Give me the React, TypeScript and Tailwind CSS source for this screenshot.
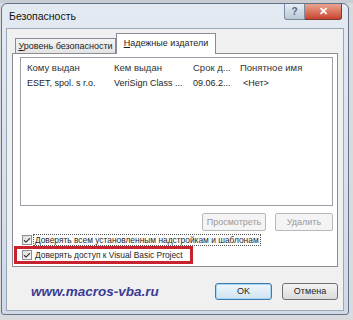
import { Check } from "lucide-react";

const font = { fontFamily: '"Liberation Sans", Arial, sans-serif' };

function CheckBox() {
  return (
    <span className="w-[10px] h-[10px] border border-[#8e8f8f] bg-gradient-to-br from-[#dcdcdc] to-[#fbfbfb] flex items-center justify-center shrink-0">
      <Check className="w-[9px] h-[9px] text-[#3a3a3a]" strokeWidth={3.2} />
    </span>
  );
}

function DisabledButton({ label, w }: { label: string; w: string }) {
  return (
    <div className={`${w} h-[18px] border border-[#b5b9bc] rounded-[2px] bg-[#f4f4f4] text-[#9a9a9a] flex items-center justify-center`}>
      {label}
    </div>
  );
}

export default function App() {
  return (
    <div style={font} className="w-[353px] h-[320px] bg-[#d8dadd] overflow-hidden flex flex-col text-[9px] text-[#1e1e1e] leading-none whitespace-nowrap">
      {/* полоска сетки над окном */}
      <div className="h-[3px] shrink-0 bg-[#c9ccd0]" />

      <div className="ml-[1px] w-[348px] h-[312px] border border-[#62738a] rounded-t-[6px] rounded-b-[3px] bg-gradient-to-b from-[#e3eaf2] to-[#cfdae6] flex flex-col px-[4px] pb-[3px] shrink-0">
        {/* заголовок */}
        <div className="h-[24px] flex justify-between shrink-0">
          <div className="pl-[3px] pt-[7px] text-[10.5px] text-[#111]">Безопасность</div>
          <div className="flex mr-[2px]">
            <div className="w-[21px] h-[16px] border border-[#7b8a9c] border-t-0 rounded-bl-[3px] bg-gradient-to-b from-[#e6edf4] to-[#b9c7d6] flex items-center justify-center text-[10px] text-[#56677c] font-bold">?</div>
            <div className="w-[37px] h-[16px] border border-[#7b3b33] border-t-0 border-l-0 rounded-br-[3px] bg-gradient-to-b from-[#e8a493] to-[#c9432b] flex items-center justify-center text-[11px] text-white font-bold">✕</div>
          </div>
        </div>

        {/* клиентская область */}
        <div className="flex-1 border border-[#9aa6b4] bg-[#f0f0f0] flex flex-col pl-[5px] pr-[5px]">
          {/* вкладки */}
          <div className="flex items-end h-[24px] pl-[3px] shrink-0">
            <div className="w-[101px] h-[15px] border border-[#898c95] border-b-0 bg-gradient-to-b from-[#f3f3f3] to-[#e3e3e3] flex items-center justify-center">
              <span><u>У</u>ровень безопасности</span>
            </div>
            <div className="w-[100px] h-[21px] border border-[#898c95] border-b-0 bg-white -mb-[1px] relative flex items-center justify-center pb-[2px]">
              <span><u>Н</u>адежные издатели</span>
            </div>
          </div>

          {/* панель */}
          <div className="h-[214px] border border-[#898c95] bg-white flex flex-col pl-[7px] pr-[4px] pt-[3px] shrink-0">
            <div className="h-[149px] border border-[#9a9ea6] flex flex-col shrink-0">
              <div className="flex h-[19px] items-center text-[#333] shrink-0 text-[9.5px]">
                <span className="w-[93px] pl-[6px]">Кому выдан</span>
                <span className="w-[79px]">Кем выдан</span>
                <span className="w-[47px]">Срок д...</span>
                <span>Понятное имя</span>
              </div>
              <div className="flex h-[13px] items-center">
                <span className="w-[93px] pl-[6px]">ESET, spol. s r.o.</span>
                <span className="w-[79px]">VeriSign Class ...</span>
                <span className="w-[50px]">09.06.2...</span>
                <span>&lt;Нет&gt;</span>
              </div>
            </div>

            <div className="flex justify-end gap-[9px] mt-[7px] shrink-0">
              <DisabledButton label="Просмотреть" w="w-[64px]" />
              <DisabledButton label="Удалить" w="w-[58px]" />
            </div>

            <div className="flex items-center mt-[3px] pl-[2px] h-[12px] text-[8.4px] shrink-0">
              <CheckBox />
              <span className="ml-[1px] px-[1px] border border-dotted border-[#555] h-[12px] flex items-center">
                <u>Д</u>оверять всем установленным надстройкам и шаблонам
              </span>
            </div>

            <div className="-ml-[6px] w-[179px] h-[18px] border-[3px] border-[#c8232c] flex items-center pl-[5px] text-[8.4px] shrink-0">
              <CheckBox />
              <span className="ml-[3px]">
                <u>Д</u>оверять доступ к Visual Basic Project
              </span>
            </div>
          </div>

          {/* нижняя часть */}
          <div className="flex items-center flex-1 pt-[6px]">
            <span className="pl-[19px] text-[13.5px] font-bold italic text-[#3b3b94]">
              www.macros-vba.ru
            </span>
            <div className="ml-auto flex gap-[10px]">
              <div className="w-[57px] h-[17px] border border-[#3d7bad] rounded-[3px] bg-gradient-to-b from-[#eef6fb] to-[#cfe4f1] shadow-[inset_0_0_0_1px_#a9d6f2] flex items-center justify-center">OK</div>
              <div className="w-[56px] h-[17px] border border-[#707070] rounded-[3px] bg-gradient-to-b from-[#f3f3f3] to-[#dcdcdc] flex items-center justify-center">Отмена</div>
            </div>
          </div>
        </div>
      </div>
    </div>
  );
}
